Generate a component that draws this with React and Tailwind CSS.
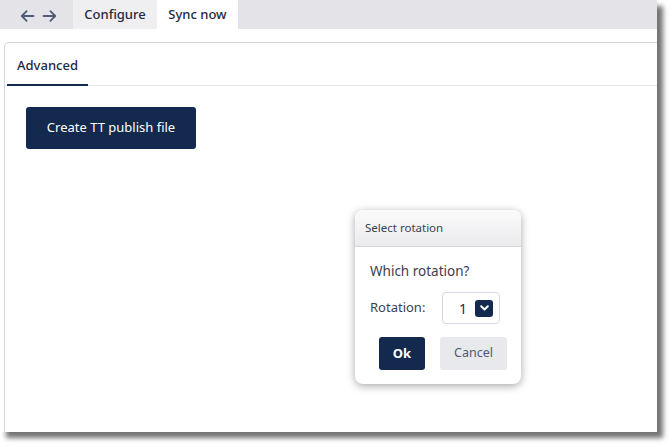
import React from "react";

function Arrow({ dir }) {
  return (
    <svg width="15" height="14" viewBox="0 0 15 14" fill="none" stroke="#4f5d78" strokeWidth="1.8" strokeLinecap="round" strokeLinejoin="round">
      {dir === "left" ? (
        <>
          <path d="M13.5 7H1.8" />
          <path d="M6.6 2.1L1.8 7l4.8 4.9" />
        </>
      ) : (
        <>
          <path d="M1.5 7h11.7" />
          <path d="M8.4 2.1L13.2 7l-4.8 4.9" />
        </>
      )}
    </svg>
  );
}

export default function App() {
  const font = { fontFamily: '"Noto Sans", "Open Sans", sans-serif' };
  return (
    <div className="w-[672px] h-[447px] bg-white relative overflow-hidden" style={font}>
      <div className="w-[657px] h-[432px] bg-white flex flex-col shadow-[6px_6px_5px_rgba(0,0,0,0.55)]">
        <div className="h-[29px] bg-[#e3e3e8] flex items-stretch shrink-0">
          <div className="w-[73px] flex items-center pl-[20px] gap-[7px] pt-[2px]">
            <Arrow dir="left" />
            <Arrow dir="right" />
          </div>
          <div className="w-[84px] bg-[#efeff2] flex items-center justify-center pt-[1px] text-[13px] font-medium text-[#1d2a44]">
            Configure
          </div>
          <div className="w-[81px] bg-white flex items-center justify-center pt-[1px] text-[13px] font-medium text-[#1d2a44]">
            Sync now
          </div>
        </div>
        <div className="flex-1 pt-[13px] pl-[4px] flex flex-col">
          <div className="flex-1 border-l border-t border-[#d3d6de] rounded-tl-[5px] flex flex-col">
            <div className="h-[43px] border-b border-[#e6e6ea] flex items-end pl-[2px] shrink-0">
              <div className="w-[81px] h-full flex items-center justify-center pt-[3px] border-b-2 border-[#13294d] -mb-px text-[13px] font-medium text-[#1d2a44]">
                Advanced
              </div>
            </div>
            <div className="pl-[21px] pt-[21px]">
              <button className="w-[170px] h-[42px] bg-[#13294d] rounded-[3px] text-white text-[13px]">
                Create TT publish file
              </button>
            </div>
          </div>
        </div>
      </div>

      <div className="absolute left-[355px] top-[210px] w-[166px] h-[174px] bg-white rounded-[8px] shadow-[0_2px_8px_rgba(0,0,0,0.35)] flex flex-col overflow-hidden">
        <div className="h-[37px] bg-gradient-to-b from-[#fbfbfc] to-[#ebebee] border-b border-[#d3d4da] flex items-center pl-[10px] text-[11.5px] text-[#3b4150]">
          Select rotation
        </div>
        <div className="flex flex-col pl-[15px]">
          <div className="h-[24px] mt-[12px] flex items-center text-[13.5px] text-[#3b4150]">Which rotation?</div>
          <div className="mt-[9px] flex items-center">
            <div className="w-[72px] text-[13px] text-[#3b4150]">Rotation:</div>
            <div className="w-[58px] h-[32px] border border-[#d6d9e0] rounded-[4px] flex items-center justify-end pr-[6px] gap-[8px]">
              <span className="text-[14px] text-[#1d2a44]">1</span>
              <span className="w-[18px] h-[17px] bg-[#13294d] rounded-[3px] flex items-center justify-center">
                <svg width="9" height="6" viewBox="0 0 9 6" fill="none" stroke="white" strokeWidth="2" strokeLinecap="round" strokeLinejoin="round">
                  <path d="M1.2 1.2L4.5 4.5 7.8 1.2" />
                </svg>
              </span>
            </div>
          </div>
          <div className="mt-[13px] flex items-center pl-[9px] gap-[15px]">
            <button className="w-[46px] h-[33px] bg-[#13294d] rounded-[3px] text-white text-[13px] font-bold">Ok</button>
            <button className="w-[67px] h-[33px] bg-[#e8e9ed] rounded-[3px] text-[#4f5a6d] text-[12.5px]">Cancel</button>
          </div>
        </div>
      </div>
    </div>
  );
}
